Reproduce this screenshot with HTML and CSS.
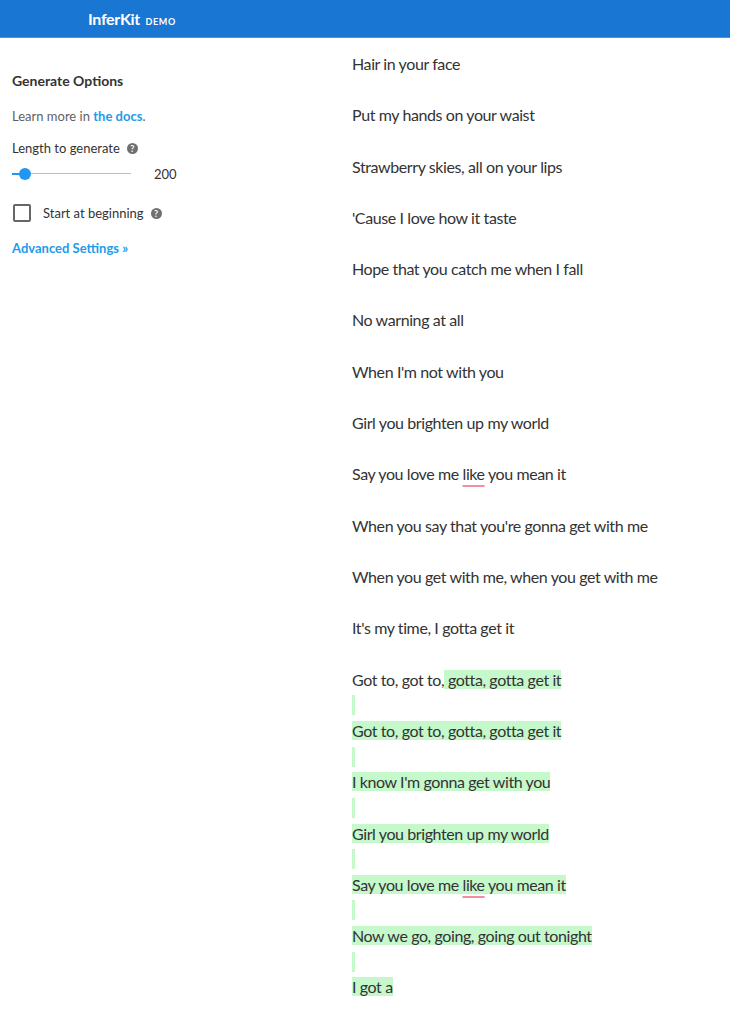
FILE: index.html
```html
<!DOCTYPE html>
<html lang="en">
<head>
  <meta charset="UTF-8" />
  <meta name="viewport" content="width=device-width, initial-scale=1.0" />
  <title>InferKit Demo</title>
  <link rel="stylesheet" href="styles.css">
</head>
<body>

<header class="topbar">
  <div class="logo">InferKit <span class="logo-tag">DEMO</span></div>
</header>

<div class="layout">
  <aside class="options">
    <h2>Generate Options</h2>
    <p class="docs">Learn more in <a href="#">the docs</a>.</p>

    <div class="field-label">Length to generate <span class="help">?</span></div>
    <div class="slider-row">
      <div class="slider">
        <div class="track"></div>
        <div class="fill"></div>
        <div class="thumb"></div>
      </div>
      <span class="slider-value">200</span>
    </div>

    <label class="check-row">
      <span class="checkbox"></span>
      <span>Start at beginning</span>
      <span class="help">?</span>
    </label>

    <a class="advanced" href="#">Advanced Settings »</a>
  </aside>

  <main class="editor">
    <div class="line">Hair in your face</div>
    <div class="line"></div>
    <div class="line">Put my hands on your waist</div>
    <div class="line"></div>
    <div class="line">Strawberry skies, all on your lips</div>
    <div class="line"></div>
    <div class="line">'Cause I love how it taste</div>
    <div class="line"></div>
    <div class="line">Hope that you catch me when I fall</div>
    <div class="line"></div>
    <div class="line">No warning at all</div>
    <div class="line"></div>
    <div class="line">When I'm not with you</div>
    <div class="line"></div>
    <div class="line">Girl you brighten up my world</div>
    <div class="line"></div>
    <div class="line">Say you love me <span class="spell">like</span> you mean it</div>
    <div class="line"></div>
    <div class="line">When you say that you're gonna get with me</div>
    <div class="line"></div>
    <div class="line">When you get with me, when you get with me</div>
    <div class="line"></div>
    <div class="line">It's my time, I gotta get it</div>
    <div class="line"></div>
    <div class="line">Got to, got to,<mark class="gen"> gotta, gotta get it</mark></div>
    <div class="line"><mark class="gen nl"></mark></div>
    <div class="line"><mark class="gen">Got to, got to, gotta, gotta get it</mark></div>
    <div class="line"><mark class="gen nl"></mark></div>
    <div class="line"><mark class="gen">I know I'm gonna get with you</mark></div>
    <div class="line"><mark class="gen nl"></mark></div>
    <div class="line"><mark class="gen">Girl you brighten up my world</mark></div>
    <div class="line"><mark class="gen nl"></mark></div>
    <div class="line"><mark class="gen">Say you love me <span class="spell">like</span> you mean it</mark></div>
    <div class="line"><mark class="gen nl"></mark></div>
    <div class="line"><mark class="gen">Now we go, going, going out tonight</mark></div>
    <div class="line"><mark class="gen nl"></mark></div>
    <div class="line"><mark class="gen">I got a</mark></div>
  </main>
</div>

</body>
</html>
```

FILE: styles.css
```css
:root {
  --blue: #1976d2;
  --link: #1e9be9;
  --text: #333;
  --muted: #5f5f5f;
  --green: #c5f8cb;
}

body {
  margin: 0;
  font-family: Lato, "Open Sans", sans-serif;
  color: var(--text);
  background: #fff;
}

.topbar {
  height: 37px;
  background: var(--blue);
  border-bottom: 1px solid #4a92df;
  display: flex;
  align-items: center;
  padding-left: 88px;
}

.logo {
  color: #fff;
  font-weight: 700;
  font-size: 16px;
  letter-spacing: -0.3px;
}

.logo-tag {
  font-size: 9px;
  letter-spacing: 0.6px;
  margin-left: 2px;
}

.layout {
  display: grid;
  grid-template-columns: 340px 1fr;
}

.options {
  padding: 24px 12px;
  font-size: 13px;
}

.options h2 {
  font-size: 14px;
  font-weight: 700;
  margin: 10px 0 19px;
}

.docs {
  color: var(--muted);
  margin: 0 0 16px;
}

.docs a,
.advanced {
  color: var(--link);
  font-weight: 700;
  text-decoration: none;
}

.field-label {
  display: flex;
  align-items: center;
  gap: 7px;
}

.help {
  display: inline-flex;
  align-items: center;
  justify-content: center;
  width: 11px;
  height: 11px;
  border-radius: 50%;
  background: #707070;
  color: #fff;
  font-size: 9px;
  font-weight: 700;
}

.slider-row {
  display: flex;
  align-items: center;
  gap: 23px;
  margin: 10px 0 22px;
}

.slider {
  position: relative;
  width: 119px;
  height: 12px;
}

.slider .track {
  position: absolute;
  left: 0;
  right: 0;
  top: 5px;
  height: 1px;
  background: #90caf9;
}

.slider .fill {
  position: absolute;
  left: 0;
  top: 5px;
  width: 13px;
  height: 2px;
  background: #2196f3;
}

.slider .thumb {
  position: absolute;
  left: 7px;
  top: 0;
  width: 12px;
  height: 12px;
  border-radius: 50%;
  background: #2196f3;
}

.slider-value {
  font-size: 13px;
}

.check-row {
  display: flex;
  align-items: center;
}

.checkbox {
  width: 14px;
  height: 14px;
  border: 2px solid #666;
  border-radius: 2px;
  margin: 0 12px 0 1px;
}

.check-row .help {
  margin-left: 7px;
}

.advanced {
  display: block;
  margin-top: 18px;
}

.editor {
  padding: 13px 12px 0;
  font-size: 16px;
  line-height: 25.65px;
  letter-spacing: -0.4px;
}

.line {
  min-height: 25.65px;
  white-space: pre;
}

.gen {
  background: var(--green);
  color: inherit;
}

.gen.nl {
  display: inline-block;
  width: 3px;
  height: 20px;
  vertical-align: -4px;
}

.spell {
  text-decoration: underline;
  text-decoration-color: #f48ca4;
  text-decoration-thickness: 2px;
  text-underline-offset: 5px;
}
```
